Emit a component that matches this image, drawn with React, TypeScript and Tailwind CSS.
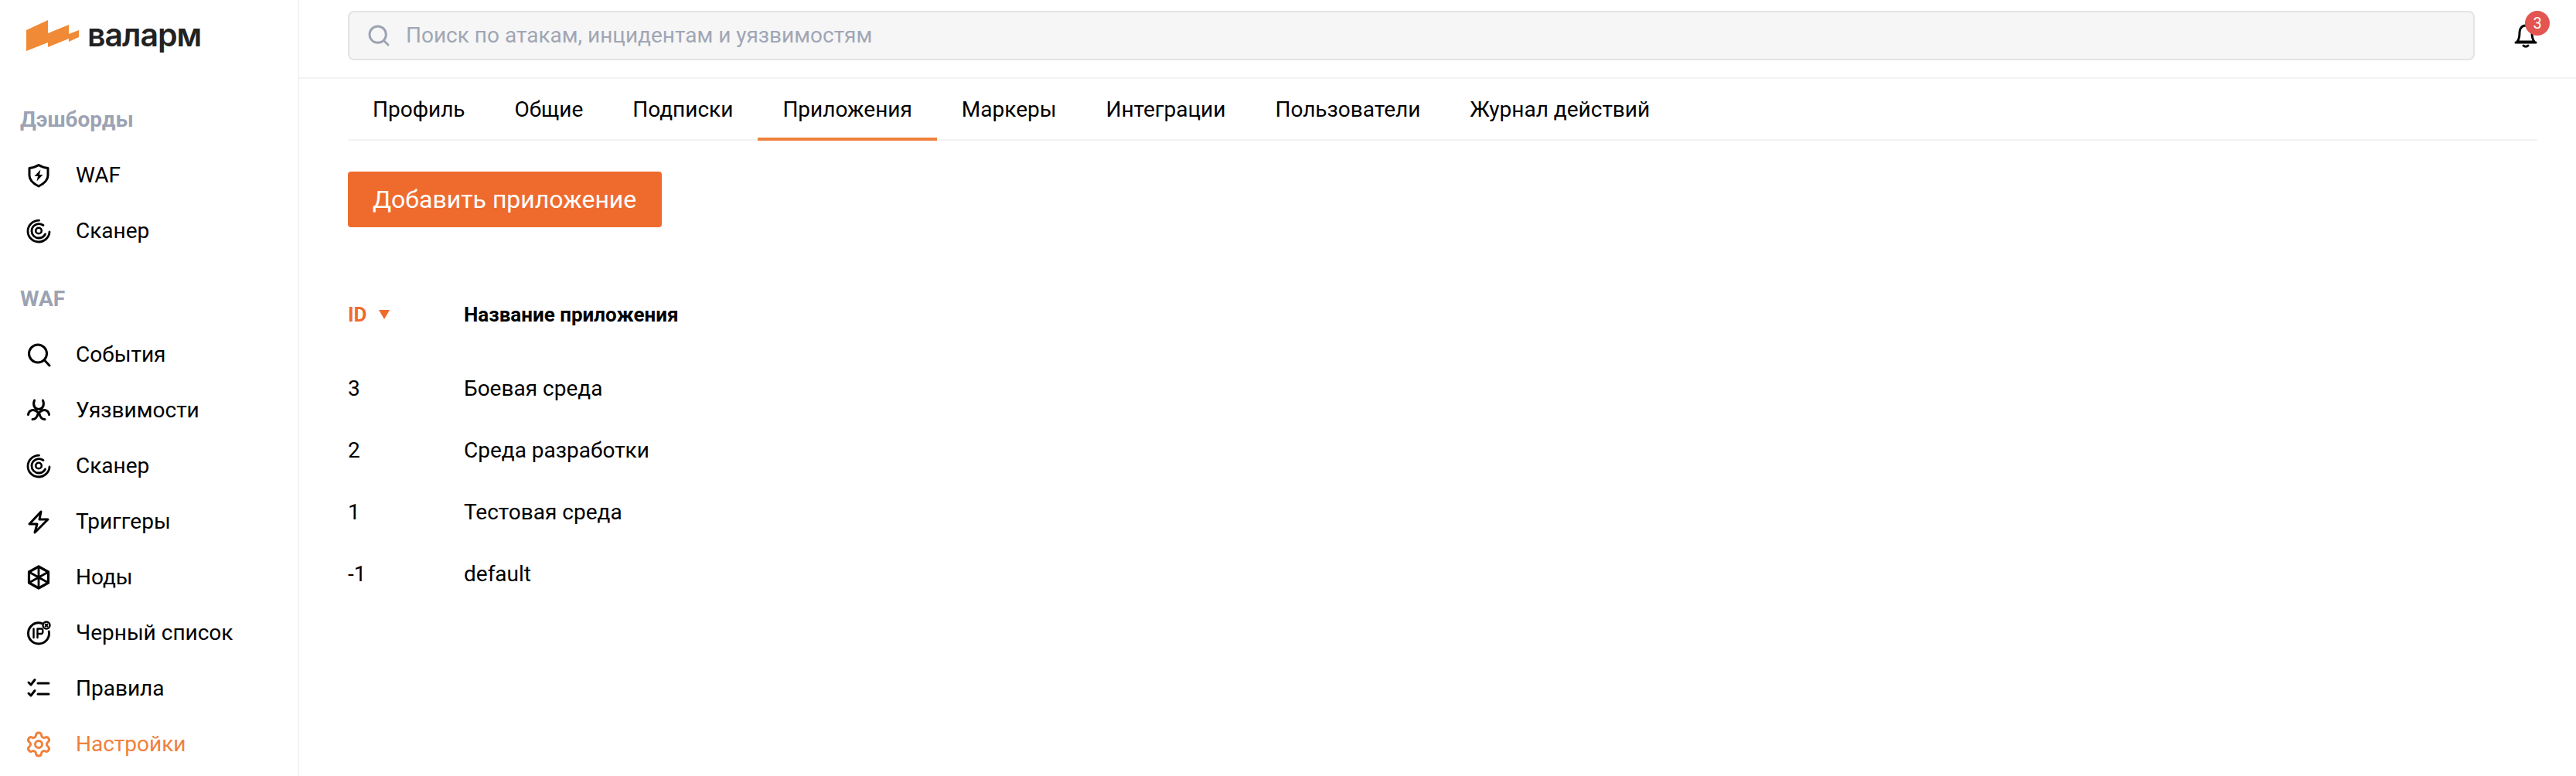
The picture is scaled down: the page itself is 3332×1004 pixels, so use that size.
import { Search, Settings } from "lucide-react";
import type { ReactNode } from "react";

const stroke = { fill: "none", stroke: "currentColor", strokeWidth: 3, strokeLinecap: "round" as const, strokeLinejoin: "round" as const };

function Ico({ children, className = "" }: { children: ReactNode; className?: string }) {
  return (
    <svg viewBox="0 0 32 32" className={`w-8 h-8 shrink-0 ${className}`}>
      {children}
    </svg>
  );
}

const ShieldIcon = () => (
  <Ico>
    <path d="M16 2.5 C19 4.5 23 6 28 6.5 V16 C28 23 22 27 16 30 C10 27 4 23 4 16 V6.5 C9 6 13 4.5 16 2.5 Z" {...stroke} />
    <path d="M18.5 8.5 L10.5 17 H15 L13.5 23.5 L21.5 15 H17 Z" fill="currentColor" />
  </Ico>
);
const ScanIcon = () => (
  <Ico>
    <path d="M16.5 2.2 C8.5 2.2 2 8.6 2 16.2 C2 24 8.5 30 16 30 C23.5 30 29.8 24 30 17" {...stroke} strokeWidth={2.8} />
    <path d="M22 8.5 C19 6.5 15.5 6.2 12.5 7.6 C9 9.2 7 12.5 7 16 C7 21 11 25 16 25 C20 25 23 23 24.5 20" {...stroke} strokeWidth={2.8} />
    <circle cx="16" cy="15.5" r="3.8" {...stroke} strokeWidth={2.6} />
  </Ico>
);
const SearchIcon = () => (
  <Ico>
    <circle cx="15" cy="14.5" r="11.5" {...stroke} />
    <path d="M23.5 23 L30 30" {...stroke} />
  </Ico>
);
const BioIcon = () => (
  <Ico>
    <path d="M10.5 3 C8 9 11 14.5 16 14.5 C21 14.5 24 9 21.5 3" {...stroke} />
    <path d="M2.5 21.5 C3.5 15 10 13.5 15 18.5" {...stroke} />
    <path d="M29.5 21.5 C28.5 15 22 13.5 17 18.5" {...stroke} />
    <path d="M8 27.5 C11 27.5 14 25 15 20.5" {...stroke} />
    <path d="M24 27.5 C21 27.5 18 25 17 20.5" {...stroke} />
  </Ico>
);
const BoltIcon = () => (
  <Ico>
    <path d="M19 3 L4 19 H14 L11 30 L28 13 H17 L19 3 Z" {...stroke} />
  </Ico>
);
const NodeIcon = () => (
  <Ico>
    <path d="M16 2 L28.5 9 V23 L16 30 L3.5 23 V9 Z" {...stroke} strokeWidth={3.2} />
    <path d="M16 2 V30 M3.5 9 L28.5 23 M28.5 9 L3.5 23" {...stroke} strokeWidth={2.8} />
  </Ico>
);
const BlockIcon = () => (
  <Ico>
    <path d="M20 3.5 C18.5 3 17.3 2.8 16 2.8 C8.5 2.8 2.5 9 2.5 16.5 C2.5 24 8.5 30 16 30 C23.5 30 29.5 24 29.5 16.5 C29.5 15.5 29.4 14.8 29.2 14" {...stroke} />
    <path d="M9.5 10.5 V22 M14.5 22 V10.5 H19.5 C22 10.5 22 17 19.5 17 H14.5" {...stroke} strokeWidth={2.4} />
    <circle cx="26" cy="6" r="4.5" {...stroke} strokeWidth={2.4} />
    <path d="M24.5 4.5 L27.5 7.5 M27.5 4.5 L24.5 7.5" {...stroke} strokeWidth={1.8} />
  </Ico>
);
const RulesIcon = () => (
  <Ico>
    <path d="M3 8 L6 11 L11 4.5 M3 22 L6 25 L11 18.5" {...stroke} />
    <path d="M15 9 H29 M15 23 H29" {...stroke} />
  </Ico>
);

const Heading = ({ children, className = "" }: { children: ReactNode; className?: string }) => (
  <div className={`h-[72px] flex items-center pl-[26px] text-[28px] font-bold text-[#9ca3b4] ${className}`}>{children}</div>
);

const NavItem = ({ icon, label, active }: { icon: ReactNode; label: string; active?: boolean }) => (
  <div className={`h-[72px] flex items-center pl-[34px] gap-[32px] text-[28px] ${active ? "text-[#f0813b]" : "text-black"}`}>
    {icon}
    <span>{label}</span>
  </div>
);

const tabs = ["Профиль", "Общие", "Подписки", "Приложения", "Маркеры", "Интеграции", "Пользователи", "Журнал действий"];
const rows = [
  ["3", "Боевая среда"],
  ["2", "Среда разработки"],
  ["1", "Тестовая среда"],
  ["-1", "default"],
];

export default function App() {
  return (
    <div className="flex h-[1004px] w-[3332px] overflow-hidden bg-white text-black font-['Roboto',sans-serif]">
      <aside className="w-[387px] shrink-0 border-r-2 border-[#f3f3f3] flex flex-col">
        <div className="h-[102px] shrink-0 flex items-center pl-[34px] gap-[11px]">
          <svg viewBox="0 0 68 40" className="w-[68px] h-[40px] shrink-0 -mt-[10px]">
            <path d="M0 13 L28 0 V17 L55 6 V18 L68 13 V22 L55 28 V24 L28 35 V29 L0 40 Z" fill="#f08a36" />
          </svg>
          <span className="text-[41px] leading-none font-semibold text-[#222] font-['Inter',sans-serif] -mt-[11px] tracking-[-1px]">валарм</span>
        </div>
        <Heading className="mt-[17px]">Дэшборды</Heading>
        <NavItem icon={<ShieldIcon />} label="WAF" />
        <NavItem icon={<ScanIcon />} label="Сканер" />
        <Heading className="mt-[16px]">WAF</Heading>
        <NavItem icon={<SearchIcon />} label="События" />
        <NavItem icon={<BioIcon />} label="Уязвимости" />
        <NavItem icon={<ScanIcon />} label="Сканер" />
        <NavItem icon={<BoltIcon />} label="Триггеры" />
        <NavItem icon={<NodeIcon />} label="Ноды" />
        <NavItem icon={<BlockIcon />} label="Черный список" />
        <NavItem icon={<RulesIcon />} label="Правила" />
        <NavItem icon={<Settings className="w-9 h-9 -mx-[2px]" strokeWidth={2} />} label="Настройки" active />
      </aside>
      <main className="flex-1 flex flex-col min-w-0">
        <header className="h-[102px] shrink-0 border-b-2 border-[#f3f3f3] flex items-center pl-[63px] pr-[49px] pb-[8px]">
          <div className="flex-1 h-[64px] rounded-lg border-2 border-[#e3e3e8] bg-[#f6f6f6] flex items-center pl-[22px] gap-[19px]">
            <Search className="w-8 h-8 text-[#9ca3b4]" strokeWidth={2.2} />
            <span className="text-[28px] text-[#a0a6b5]">Поиск по атакам, инцидентам и уязвимостям</span>
          </div>
          <div className="relative ml-[50px] w-[32px] h-[32px]">
            <svg viewBox="0 0 32 32" className="w-8 h-8">
              <path d="M5 24 C8 20 8 15 8 12 C8 7 11 3 16 3 C21 3 24 7 24 12 C24 15 24 20 27 24 Z" {...stroke} />
              <path d="M3 25 H29" {...stroke} />
              <path d="M13 29 C14.5 30.5 17.5 30.5 19 29" {...stroke} />
            </svg>
            <span className="absolute -top-[16px] left-[15px] w-[32px] h-[32px] rounded-full bg-[#e25550] text-white text-[20px] flex items-center justify-center">3</span>
          </div>
        </header>
        <div className="pl-[63px] pr-[50px] flex flex-col">
          <nav className="h-[80px] flex border-b-2 border-[#f3f3f3]">
            {tabs.map((t) => (
              <div
                key={t}
                className={`h-[80px] px-[32px] flex items-center text-[28px] border-b-4 pt-[4px] ${t === "Приложения" ? "border-[#f0813b]" : "border-transparent"}`}
              >
                {t}
              </div>
            ))}
          </nav>
          <button className="mt-[40px] w-[406px] h-[72px] rounded-[4px] bg-[#ef6b2d] text-white text-[32px] text-left pl-[32px]">
            Добавить приложение
          </button>
          <div className="mt-[73px] flex flex-col text-[28px]">
            <div className="flex items-center h-[80px] font-bold text-[26px]">
              <div className="w-[150px] flex items-center gap-[15px] text-[#ef6b2d]">
                ID
                <svg viewBox="0 0 14 12" className="w-[14px] h-[12px]">
                  <path d="M0 0 H14 L7 12 Z" fill="#ef6b2d" />
                </svg>
              </div>
              <div>Название приложения</div>
            </div>
            <div className="mt-[16px]">
              {rows.map(([id, name]) => (
                <div key={id} className="flex items-center h-[80px]">
                  <div className="w-[150px]">{id}</div>
                  <div>{name}</div>
                </div>
              ))}
            </div>
          </div>
        </div>
      </main>
    </div>
  );
}
